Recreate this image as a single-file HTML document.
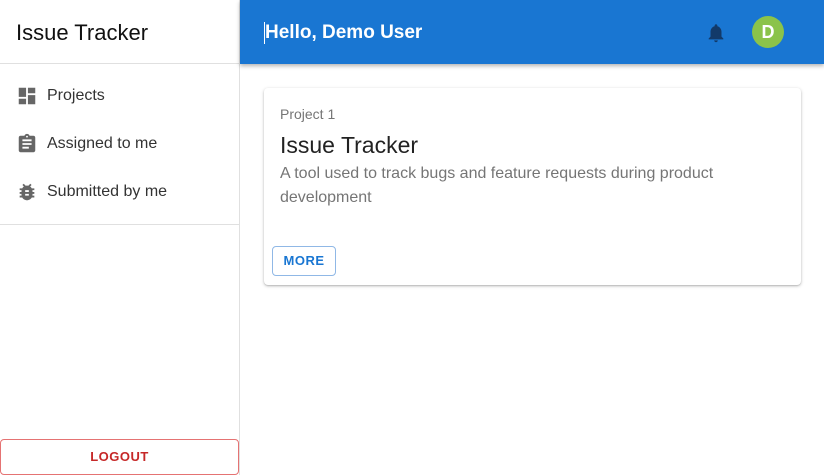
<!DOCTYPE html>
<html><head><style>
*{box-sizing:border-box;margin:0;padding:0}
body{width:824px;height:475px;overflow:hidden;font-family:"Liberation Sans",sans-serif;background:#fff;position:relative}
.side{position:absolute;left:0;top:0;width:240px;height:475px;border-right:1px solid #e0e0e0;background:#fff}
.brand{height:64px;border-bottom:1px solid #e0e0e0;font-size:22px;color:#111;padding:20px 0 0 16px}
.nav{padding-top:8px;border-bottom:1px solid #e0e0e0;height:161px}
.item{height:48px;display:flex;align-items:center;padding-left:16px;font-size:16px;color:#333}
.item svg{width:22px;height:22px;margin-right:9px;fill:#666}
.logout{position:absolute;left:0;top:439px;width:239px;height:36px;border:1px solid #e57373;border-radius:4px;color:#c62828;font-size:13px;font-weight:bold;letter-spacing:.5px;text-align:center;line-height:34px}
.bar{position:absolute;left:240px;top:0;width:584px;height:64px;background:#1976d2;box-shadow:0 2px 4px rgba(0,0,0,.3)}
.bar .t{position:absolute;left:24px;top:22px;color:#fff;font-size:19px;font-weight:bold;border-left:1px solid #fff}
.bell{position:absolute;left:465px;top:22px}
.av{position:absolute;left:512px;top:16px;width:32px;height:32px;border-radius:50%;background:#8bc34a;color:#fff;font-weight:bold;font-size:18px;text-align:center;line-height:32px}
.card{position:absolute;left:264px;top:88px;width:537px;height:197px;background:#fff;border-radius:4px;box-shadow:0 1px 3px rgba(0,0,0,.25),0 1px 1px rgba(0,0,0,.1)}
.c1{position:absolute;left:16px;top:18px;font-size:14px;color:#757575}
.c2{position:absolute;left:16px;top:44px;font-size:23px;color:#222}
.c3{position:absolute;left:16px;top:74px;font-size:16px;color:#757575;line-height:24px;width:480px}
.more{position:absolute;left:8px;top:158px;width:64px;height:30px;border:1px solid #90b8e6;border-radius:4px;color:#1976d2;font-size:13px;font-weight:bold;text-align:center;line-height:28px;letter-spacing:.5px}
</style></head><body>
<div class="side">
<div class="brand">Issue Tracker</div>
<div class="nav">
<div class="item"><svg viewBox="0 0 24 24"><path d="M3 13h8V3H3v10zm0 8h8v-6H3v6zm10 0h8V11h-8v10zm0-18v6h8V3h-8z"/></svg>Projects</div>
<div class="item"><svg viewBox="0 0 24 24"><path d="M19 3h-4.18C14.4 1.840 13.3 1 12 1s-2.4.84-2.82 2H5c-1.1 0-2 .9-2 2v14c0 1.1.9 2 2 2h14c1.1 0 2-.9 2-2V5c0-1.1-.9-2-2-2zm-7 0c.55 0 1 .45 1 1s-.45 1-1 1-1-.45-1-1 .45-1 1-1zm2 14H7v-2h7v2zm3-4H7v-2h10v2zm0-4H7V7h10v2z"/></svg>Assigned to me</div>
<div class="item"><svg viewBox="0 0 24 24"><path d="M20 8h-2.81c-.45-.78-1.07-1.45-1.82-1.96L17 4.41 15.59 3l-2.17 2.17C12.96 5.06 12.49 5 12 5s-.96.06-1.41.17L8.41 3 7 4.41l1.62 1.630C7.88 6.55 7.26 7.22 6.81 8H4v2h2.09c-.05.33-.09.66-.09 1v1H4v2h2v1c0 .34.04.67.09 1H4v2h2.81c1.04 1.79 2.97 3 5.19 3s4.15-1.21 5.19-3H20v-2h-2.09c.05-.33.09-.66.09-1v-1h2v-2h-2v-1c0-.34-.04-.67-.09-1H20V8zm-6 8h-4v-2h4v2zm0-4h-4v-2h4v2z"/></svg>Submitted by me</div>
</div>
<div class="logout">LOGOUT</div>
</div>
<div class="bar">
<div class="t">Hello, Demo User</div>
<svg class="bell" width="22" height="22" viewBox="0 0 24 24"><path fill="#123a6a" d="M12 22c1.1 0 2-.9 2-2h-4c0 1.1.9 2 2 2zm6-6v-5c0-3.070-1.63-5.64-4.5-6.32V4c0-.83-.67-1.5-1.5-1.5s-1.5.67-1.5 1.5v.68C7.64 5.36 6 7.92 6 11v5l-2 2v1h16v-1l-2-2z"/></svg>
<div class="av">D</div>
</div>
<div class="card">
<div class="c1">Project 1</div>
<div class="c2">Issue Tracker</div>
<div class="c3">A tool used to track bugs and feature requests during product development</div>
<div class="more">MORE</div>
</div>
</body></html>
